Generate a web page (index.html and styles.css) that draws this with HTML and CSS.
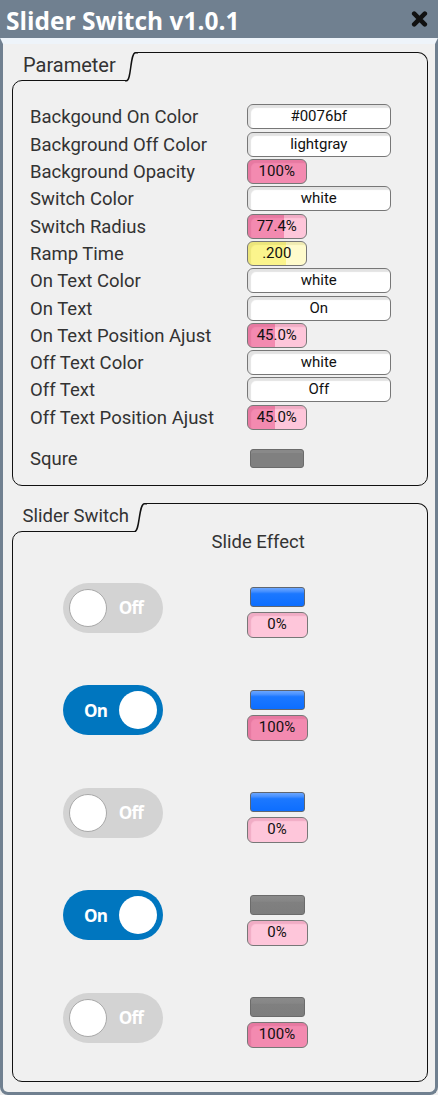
FILE: index.html
```html
<!DOCTYPE html>
<html lang="en">
<head>
<meta charset="utf-8">
<title>Slider Switch v1.0.1</title>
<link rel="stylesheet" href="styles.css">
</head>
<body>
<div class="window">
  <header class="titlebar">
    <h1 class="title">Slider Switch v1.0.1</h1>
    <svg class="close" width="17" height="18" viewBox="0 0 17 18" aria-label="close">
      <path d="M3.2 3.7L13.8 14.3M13.8 3.7L3.2 14.3" stroke="#111" stroke-width="4.6" stroke-linecap="round" fill="none"/>
    </svg>
  </header>
  <main class="content">
    <section class="panel">
      <div class="panel-head">
        <div class="tab tab-params">Parameter</div>
        <svg class="tab-curve" width="13" height="29.5" viewBox="0 0 13 29.5"><path d="M0 28.75H1.5C6.5 28.75 5 0.75 10.5 0.75H13" fill="none" stroke="#111" stroke-width="1.5"/></svg>
        <div class="tab-fill"></div>
      </div>
      <div class="panel-body params">
        <div class="param-row"><span class="label">Backgound On Color</span><span class="field wide">#0076bf</span></div>
        <div class="param-row"><span class="label">Background Off Color</span><span class="field wide">lightgray</span></div>
        <div class="param-row"><span class="label">Background Opacity</span><span class="field narrow pink" style="--fill:100%">100%</span></div>
        <div class="param-row"><span class="label">Switch Color</span><span class="field wide">white</span></div>
        <div class="param-row"><span class="label">Switch Radius</span><span class="field narrow pink" style="--fill:62%">77.4%</span></div>
        <div class="param-row"><span class="label">Ramp Time</span><span class="field narrow yellow" style="--fill:66%">.200</span></div>
        <div class="param-row"><span class="label">On Text Color</span><span class="field wide">white</span></div>
        <div class="param-row"><span class="label">On Text</span><span class="field wide">On</span></div>
        <div class="param-row"><span class="label">On Text Position Ajust</span><span class="field narrow pink" style="--fill:46%">45.0%</span></div>
        <div class="param-row"><span class="label">Off Text Color</span><span class="field wide">white</span></div>
        <div class="param-row"><span class="label">Off Text</span><span class="field wide">Off</span></div>
        <div class="param-row"><span class="label">Off Text Position Ajust</span><span class="field narrow pink" style="--fill:46%">45.0%</span></div>
        <div class="param-row squre-row"><span class="label">Squre</span><span class="swatch"></span></div>
      </div>
    </section>

    <section class="panel panel-switch">
      <div class="panel-head">
        <div class="tab tab-switch">Slider Switch</div>
        <svg class="tab-curve" width="14" height="29.5" viewBox="0 0 14 29.5"><path d="M0 28.75H1.5C7 28.75 5.5 0.75 11.5 0.75H14" fill="none" stroke="#111" stroke-width="1.5"/></svg>
        <div class="tab-fill"></div>
      </div>
      <div class="panel-body switches">
        <div class="effect-title">Slide Effect</div>
        <div class="switch-grid">
          <div class="toggle off"><span class="knob"></span><span class="toggle-text">Off</span></div>
          <div class="effect"><span class="bar blue"></span><span class="pct pink" style="--fill:0%">0%</span></div>

          <div class="toggle on"><span class="toggle-text">On</span><span class="knob"></span></div>
          <div class="effect"><span class="bar blue"></span><span class="pct pink" style="--fill:100%">100%</span></div>

          <div class="toggle off"><span class="knob"></span><span class="toggle-text">Off</span></div>
          <div class="effect"><span class="bar blue"></span><span class="pct pink" style="--fill:0%">0%</span></div>

          <div class="toggle on"><span class="toggle-text">On</span><span class="knob"></span></div>
          <div class="effect"><span class="bar gray"></span><span class="pct pink" style="--fill:0%">0%</span></div>

          <div class="toggle off"><span class="knob"></span><span class="toggle-text">Off</span></div>
          <div class="effect"><span class="bar gray"></span><span class="pct pink" style="--fill:100%">100%</span></div>
        </div>
      </div>
    </section>
  </main>
</div>
</body>
</html>
```

FILE: styles.css
```css
* { box-sizing: border-box; }

html, body {
  margin: 0;
  padding: 0;
  background: #f0f0f0;
}

body {
  font-family: Roboto, "Liberation Sans", sans-serif;
  color: #333;
}

.window {
  width: 438px;
  height: 1095px;
  display: flex;
  flex-direction: column;
}

.titlebar {
  height: 38px;
  flex: none;
  background: #708090;
  display: flex;
  align-items: center;
  justify-content: space-between;
  padding: 0 10px 0 6px;
}

.title {
  margin: 0;
  font-family: "Open Sans", "DejaVu Sans", sans-serif;
  font-weight: 700;
  font-size: 24.5px;
  line-height: 34px;
  padding-top: 4px;
  color: #fff;
}

.close {
  display: block;
}

.content {
  flex: 1;
  background: #f0f0f0;
  border: 3px solid #708090;
  border-top: 6px solid #eef4fa;
  border-radius: 0 0 8px 8px;
  padding-top: 8px;
}

.panel {
  margin: 0 7px 0 8.5px;
}

.panel-switch {
  margin-top: 17px;
}

.panel-head {
  position: relative;
  z-index: 1;
  display: flex;
  height: 29.5px;
  margin-bottom: -1.5px;
}

.tab {
  flex: none;
  font-size: 20px;
  line-height: 26px;
  padding-left: 11.5px;
  color: #333;
  white-space: nowrap;
}

.tab-params { width: 113.5px; }
.tab-switch { width: 121.5px; font-size: 18.5px; padding-left: 11px; }

.tab-curve {
  flex: none;
  display: block;
  background: #f0f0f0;
}

.tab-fill {
  flex: 1;
  background: #f0f0f0;
  border-top: 1.5px solid #111;
  border-right: 1.5px solid #111;
  border-top-right-radius: 10px;
}

.panel-body {
  border: 1.5px solid #111;
  border-radius: 10px 0 10px 10px;
}

.params {
  padding: 22.35px 0 13.05px 17.5px;
}

.param-row {
  display: flex;
  align-items: center;
  height: 27.3px;
}

.squre-row {
  margin-top: 13.7px;
}

.label {
  width: 216.5px;
  flex: none;
  font-size: 18.5px;
  line-height: 22px;
  padding-top: 1px;
  color: #333;
  white-space: nowrap;
}

.field {
  display: block;
  height: 25px;
  border: 1.5px solid #777;
  border-radius: 6px;
  background: #fff;
  box-shadow: inset 3px 3px 1px rgba(0, 0, 0, 0.11);
  font-size: 15px;
  line-height: 22px;
  text-align: center;
  color: #111;
}

.wide { width: 144.5px; }
.narrow { width: 60.5px; }

.pink {
  background: linear-gradient(to right, #f38ab0 var(--fill), #fec6da var(--fill));
  box-shadow: inset 3px 3px 1px rgba(170, 40, 90, 0.16);
}

.yellow {
  background: linear-gradient(to right, #fbf48c var(--fill), #fffbcc var(--fill));
  box-shadow: inset 3px 3px 1px rgba(150, 140, 20, 0.14);
}

.swatch {
  display: block;
  width: 54px;
  height: 19px;
  margin-left: 3px;
  background: #808080;
  border: 1px solid #6b6b6b;
  border-radius: 3px;
  box-shadow: inset 0 3px 0 rgba(255, 255, 255, 0.07);
}

.switches {
  padding: 0 0 33px 0;
}

.effect-title {
  padding-left: 199px;
  font-size: 18.5px;
  line-height: 20px;
  color: #333;
}

.switch-grid {
  display: grid;
  grid-template-columns: 100px 61px;
  column-gap: 83.5px;
  row-gap: 47px;
  padding-left: 50.5px;
  margin-top: 31px;
}

.toggle {
  width: 100px;
  height: 50px;
  border-radius: 25px;
  padding: 6px;
  display: flex;
  align-items: center;
}

.toggle.off { background: #d3d3d3; }
.toggle.on { background: #0076bf; }

.knob {
  flex: none;
  width: 38px;
  height: 38px;
  border-radius: 50%;
  background: #fff;
}

.toggle.off .knob {
  border: 1px solid #a9a9a9;
}

.toggle-text {
  flex: 1;
  text-align: center;
  color: #fff;
  font-family: "Open Sans", "DejaVu Sans", sans-serif;
  font-weight: 700;
  font-size: 17px;
  letter-spacing: -0.8px;
}

.toggle.off .toggle-text { padding-right: 2px; }
.toggle.on .toggle-text { padding-left: 3px; }

.effect {
  display: flex;
  flex-direction: column;
  align-items: center;
  gap: 5px;
  margin-top: 4.5px;
}

.bar {
  display: block;
  width: 55px;
  height: 20px;
  border: 1.5px solid #5f6670;
  border-radius: 3px;
}

.bar.blue {
  background: linear-gradient(#6aa6ff 0%, #4a92ff 18%, #1c78ff 32%, #0d6eff 100%);
}

.bar.gray {
  background: linear-gradient(#8a8a8a 0%, #868686 30%, #808080 32%, #7d7d7d 100%);
  border-color: #6b6b6b;
}

.pct {
  display: block;
  width: 61px;
  height: 26px;
  border: 1.5px solid #777;
  border-radius: 6px;
  font-size: 15px;
  line-height: 23px;
  text-align: center;
  color: #111;
}
```
